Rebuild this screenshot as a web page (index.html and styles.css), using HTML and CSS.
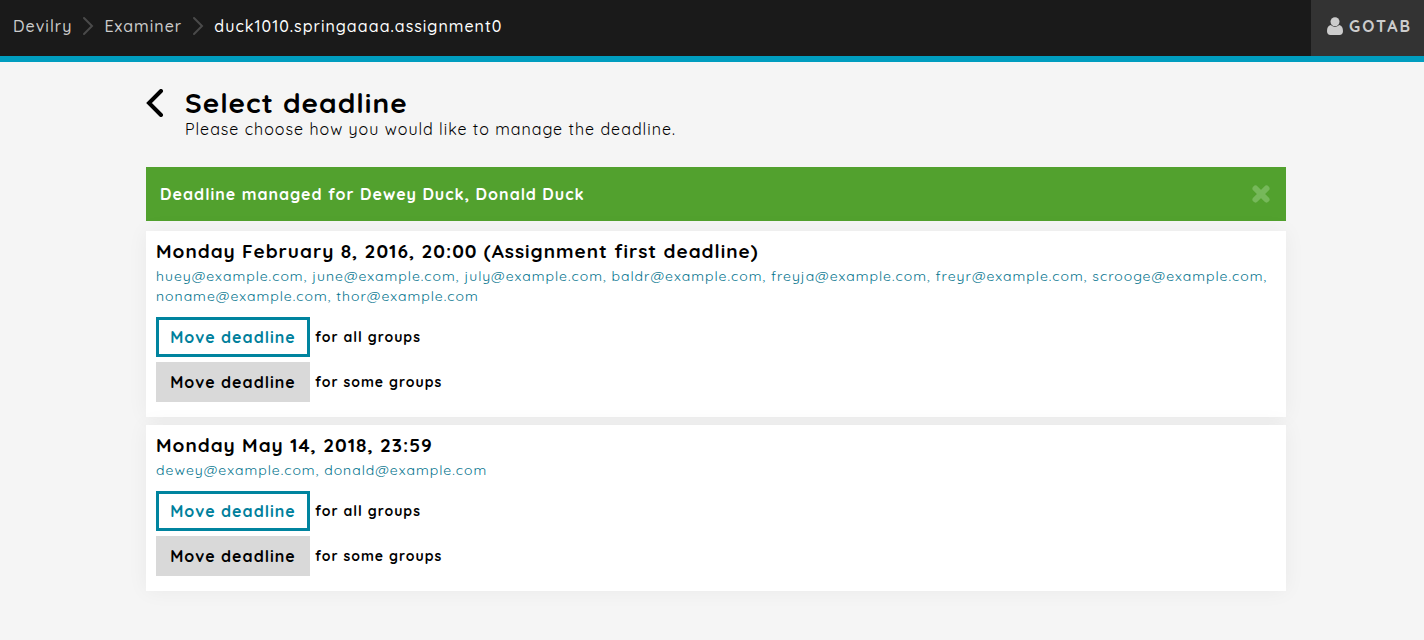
FILE: index.html
```html
<!DOCTYPE html>
<html lang="en">
<head>
<meta charset="utf-8">
<meta name="viewport" content="width=device-width, initial-scale=1">
<title>Select deadline</title>
<link rel="stylesheet" href="styles.css">
</head>
<body>
<header class="topbar">
  <nav class="breadcrumb" aria-label="Breadcrumb">
    <a class="crumb" href="#">Devilry</a>
    <svg class="crumb-sep" viewBox="0 0 12 20" aria-hidden="true"><path d="M2 2l8 8-8 8"/></svg>
    <a class="crumb" href="#">Examiner</a>
    <svg class="crumb-sep" viewBox="0 0 12 20" aria-hidden="true"><path d="M2 2l8 8-8 8"/></svg>
    <a class="crumb crumb-active" href="#">duck1010.springaaaa.assignment0</a>
  </nav>
  <a class="user" href="#">
    <svg class="user-icon" viewBox="0 0 16 18" aria-hidden="true"><path d="M3.7 8.1C1.2 8.6 0 11 0 14.2 0 16.400 1.400 18 3.400 18h9.200c2 0 3.400-1.600 3.400-3.800 0-3.200-1.200-5.600-3.700-6.100a6 6 0 0 1-8.600 0z"/><circle cx="8" cy="4.700" r="4.500"/></svg>
    <span>GOTAB</span>
  </a>
</header>
<main class="page">
  <div class="heading">
    <a class="back" href="#" aria-label="Back"><svg class="back-icon" viewBox="0 0 18 28" aria-hidden="true"><path d="M15 2L3 14l12 12"/></svg></a>
    <div>
      <h1 class="title">Select deadline</h1>
      <p class="subtitle">Please choose how you would like to manage the deadline.</p>
    </div>
  </div>
  <div class="alert" role="status">
    <span>Deadline managed for Dewey Duck, Donald Duck</span>
    <button class="close" type="button" aria-label="Close"><svg class="close-icon" viewBox="0 0 20 20" aria-hidden="true"><path d="M4.500 4.500l11 11M15.500 4.500l-11 11"/></svg></button>
  </div>
  <div class="cards">
    <section class="card">
      <h2 class="card-title">Monday February 8, 2016, 20:00 (Assignment first deadline)</h2>
      <p class="emails">huey@example.com, june@example.com, july@example.com, baldr@example.com, freyja@example.com, freyr@example.com, scrooge@example.com, noname@example.com, thor@example.com</p>
      <div class="actions">
        <div class="action"><button class="btn btn-primary" type="button">Move deadline</button><span>for all groups</span></div>
        <div class="action"><button class="btn" type="button">Move deadline</button><span>for some groups</span></div>
      </div>
    </section>
    <section class="card">
      <h2 class="card-title">Monday May 14, 2018, 23:59</h2>
      <p class="emails">dewey@example.com, donald@example.com</p>
      <div class="actions">
        <div class="action"><button class="btn btn-primary" type="button">Move deadline</button><span>for all groups</span></div>
        <div class="action"><button class="btn" type="button">Move deadline</button><span>for some groups</span></div>
      </div>
    </section>
  </div>
</main>
</body>
</html>
```
FILE: styles.css
```css
* { box-sizing: border-box; }
body {
  margin: 0;
  background: #f5f5f5;
  color: #000;
  font-family: Quicksand, Inter, "Open Sans", sans-serif;
  font-size: 16px;
  line-height: 20px;
  letter-spacing: 1px;
}
h1, h2, p { margin: 0; }
a { color: inherit; text-decoration: none; }
button { font: inherit; letter-spacing: inherit; border: 0; cursor: pointer; }
svg { display: block; flex: none; }

.topbar {
  display: flex;
  justify-content: space-between;
  background: #1a1a1a;
  border-bottom: 6px solid #009dbf;
}
.breadcrumb {
  display: flex;
  flex-wrap: wrap;
  align-items: center;
  gap: 10px;
  min-height: 56px;
  padding: 0 13px 4px;
  color: #ccc;
  font-weight: 500;
}
.crumb-active { color: #fff; }
.crumb-sep { width: 12px; height: 20px; fill: none; stroke: #4a4a4a; stroke-width: 2; stroke-linecap: round; }
.user {
  display: flex;
  align-items: center;
  gap: 6px;
  padding: 0 12px 4px 16px;
  background: #333;
  color: #ccc;
  font-weight: 700;
  letter-spacing: 2px;
}
.user-icon { width: 16px; height: 18px; fill: #ccc; }

.page { width: 100%; max-width: 1148px; margin: 0 auto; padding: 26px 0 40px 8px; }
.heading { display: flex; gap: 21px; }
.back { padding-top: 1px; }
.back-icon { width: 18px; height: 28px; fill: none; stroke: #000; stroke-width: 4; stroke-linecap: round; }
.title { font-size: 28px; line-height: 30px; font-weight: 700; }
.subtitle { line-height: 22px; }

.alert {
  display: flex;
  align-items: center;
  justify-content: space-between;
  min-height: 54px;
  margin-top: 27px;
  padding: 0 15px 0 14px;
  background: #52a12e;
  color: #fff;
  font-weight: 700;
}
.close { padding: 0; background: none; }
.close-icon { width: 20px; height: 20px; fill: none; stroke: #76b85a; stroke-width: 6; stroke-linecap: round; }

.cards { display: grid; gap: 8px; margin-top: 10px; }
.card { padding: 10px 10px 15px; background: #fff; box-shadow: 0 0 20px rgba(0, 0, 0, .05); }
.card-title { font-size: 19px; line-height: 20px; font-weight: 700; }
.emails { margin-top: 5px; font-size: 14px; line-height: 20px; color: #00728c; }
.actions { display: grid; gap: 5px; margin-top: 11px; }
.action { display: flex; align-items: center; gap: 5px; font-size: 14px; font-weight: 700; }
.btn { min-width: 154px; height: 40px; padding: 0 12px; background: #d9d9d9; color: #000; font-size: 16px; }
.btn-primary { border: 3px solid #00849f; padding: 0 9px; background: #fff; color: #00809c; }
```
